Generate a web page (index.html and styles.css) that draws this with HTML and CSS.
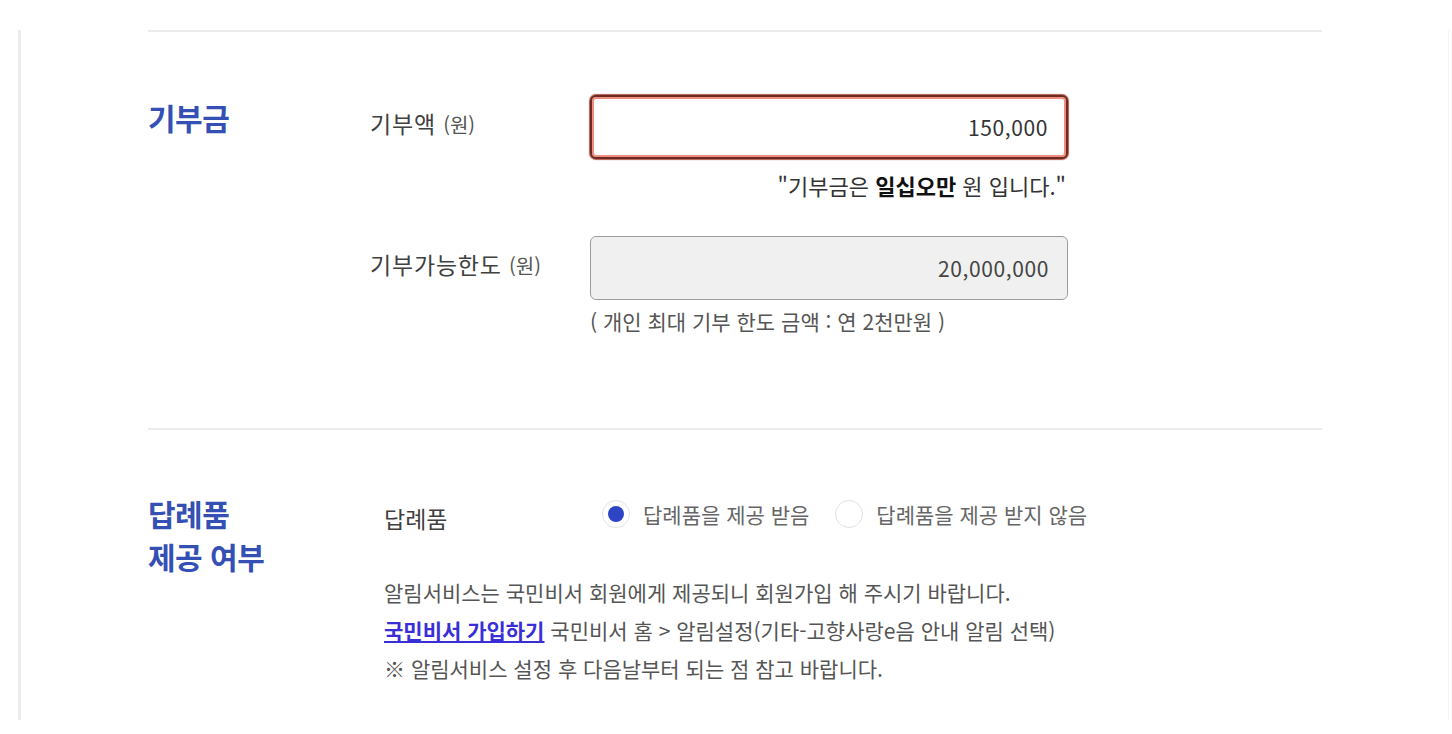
FILE: index.html
```html
<!DOCTYPE html>
<html lang="ko">
<head>
<meta charset="utf-8">
<title>기부금</title>
<link rel="stylesheet" href="styles.css">
</head>
<body>
<div class="panel">
  <div class="content">
    <section class="sec sec-donation">
      <h2 class="sec-title">기부금</h2>
      <div class="fields">
        <div class="row">
          <div class="label">기부액 <small>(원)</small></div>
          <div class="field">
            <input class="amount amount-error" type="text" value="150,000" readonly>
            <p class="hint">"기부금은 <b>일십오만</b> 원 입니다."</p>
          </div>
        </div>
        <div class="row row-second">
          <div class="label">기부가능한도 <small>(원)</small></div>
          <div class="field">
            <input class="amount amount-disabled" type="text" value="20,000,000" readonly>
            <p class="note">( 개인 최대 기부 한도 금액 : 연 2천만원 )</p>
          </div>
        </div>
      </div>
    </section>
    <section class="sec sec-gift">
      <h2 class="sec-title">답례품<br>제공 여부</h2>
      <div class="fields fields-gift">
        <div class="radio-row">
          <div class="label label-gift">답례품</div>
          <div class="radios">
            <label class="radio checked"><span class="dot"></span>답례품을 제공 받음</label>
            <label class="radio"><span class="dot"></span>답례품을 제공 받지 않음</label>
          </div>
        </div>
        <div class="info">
          <p>알림서비스는 국민비서 회원에게 제공되니 회원가입 해 주시기 바랍니다.</p>
          <p><a class="join" href="#">국민비서 가입하기</a> 국민비서 홈 &gt; 알림설정(기타-고향사랑e음 안내 알림 선택)</p>
          <p>※ 알림서비스 설정 후 다음날부터 되는 점 참고 바랍니다.</p>
        </div>
      </div>
    </section>
  </div>
</div>
</body>
</html>
```

FILE: styles.css
```css
* { box-sizing: border-box; }
html, body {
  margin: 0;
  padding: 0;
  background: #ffffff;
}
body {
  font-family: "Noto Sans CJK KR", "Noto Sans", sans-serif;
  color: #444;
}
.panel {
  margin: 30px 3px 0 18px;
  border-left: 3px solid #ececec;
  border-right: 1px solid #f3f3f3;
  background: #fff;
}
.content {
  margin-left: 127px;
  width: 1174px;
}
.sec {
  display: grid;
  grid-template-columns: 222px 1fr;
  border-top: 2px solid #ececec;
}
.sec-donation { padding: 63px 0 95px; }
.sec-gift { padding: 62px 0 33px; }
.sec-title {
  margin: 2px 0 0;
  font-size: 30px;
  font-weight: 700;
  line-height: 40px;
  letter-spacing: -0.5px;
  color: #3450b4;
}
.sec-gift .sec-title {
  margin-top: 0;
  line-height: 43px;
}
.row {
  display: grid;
  grid-template-columns: 220px 478px;
}
.row-second { margin-top: 39px; }
.label {
  padding-top: 13px;
  font-size: 23px;
  line-height: 30px;
  color: #404040;
  letter-spacing: 0.8px;
}
.label small {
  font-size: 20px;
  color: #555;
  letter-spacing: 0;
}
.amount {
  display: block;
  width: 478px;
  height: 64px;
  padding: 0 18px;
  border-radius: 6px;
  font-family: "Noto Sans CJK KR", "Noto Sans", sans-serif;
  font-size: 21px;
  letter-spacing: 0.6px;
  text-align: right;
  color: #333;
  outline: none;
}
.amount-error {
  border: 2px solid #6e2a21;
  box-shadow: inset 0 0 0 2px #f08f80, 0 0 1px 1px #b05a4c;
  background: #fff;
}
.amount-disabled {
  border: 1px solid #9c9c9c;
  background: #f0f0f0;
  color: #444;
}
.hint {
  margin: 14px 0 0;
  padding-right: 2px;
  font-size: 22px;
  line-height: 24px;
  text-align: right;
  color: #333;
}
.hint b { color: #111; }
.note {
  margin: 9px 0 0;
  font-size: 21px;
  line-height: 24px;
  color: #555;
}
.fields-gift { padding-left: 14px; }
.radio-row {
  display: grid;
  grid-template-columns: 218px 1fr;
  align-items: center;
  height: 44px;
}
.label-gift { padding-top: 8px; letter-spacing: 0; }
.radios {
  display: flex;
  align-items: center;
  gap: 26px;
}
.radio {
  display: flex;
  align-items: center;
  gap: 13px;
  font-size: 21px;
  color: #666;
}
.dot {
  width: 28px;
  height: 28px;
  border-radius: 50%;
  border: 1px solid #e2e2e2;
  background: #fff;
  position: relative;
}
.radio.checked .dot::after {
  content: "";
  position: absolute;
  left: 5px;
  top: 5px;
  width: 16px;
  height: 16px;
  border-radius: 50%;
  background: #2d45c4;
}
.info {
  margin-top: 37px;
  font-size: 21px;
  line-height: 38px;
  color: #555;
}
.info p { margin: 0; }
.join {
  color: #3a2fd6;
  font-weight: 700;
  text-decoration: underline;
}
```
